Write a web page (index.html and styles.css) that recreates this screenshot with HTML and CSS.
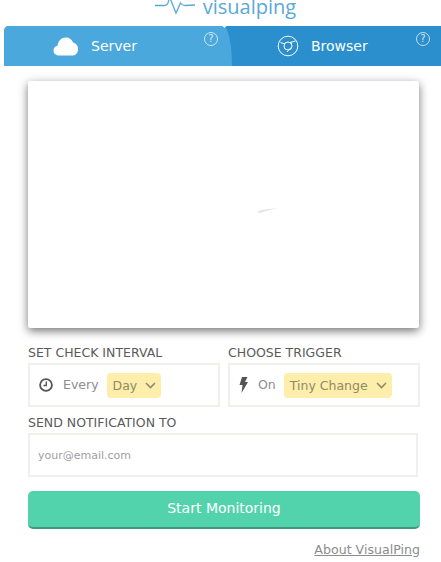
FILE: index.html
```html
<!DOCTYPE html>
<html lang="en">
<head>
    <meta charset="UTF-8">
    <meta name="viewport" content="width=device-width, initial-scale=1.0">
    <title>VisualPing</title>
    <link rel="stylesheet" href="styles.css">
</head>
<body>
    <header class="logo">
        <svg class="logo-pulse" width="40" height="14" viewBox="0 0 40 14">
            <path d="M0 5.500 H10 Q12 5.500 13 3 L14.500 -3 L21 13 L25.500 3 Q27 5.500 30 5.500 L40 5" fill="none" stroke="#5aa9d8" stroke-width="1.300"/>
        </svg>
        <span class="logo-text">visualping</span>
    </header>

    <nav class="tabs">
        <div class="tab tab-server">
            <svg class="tab-icon" width="26" height="20" viewBox="0 0 26 20">
                <path d="M6 19.500 C2.500 19.500 0.500 17 0.500 14.500 C0.500 11.800 2.500 10 4.500 9.800 C5 5 8.500 1.500 13 1.500 C16.500 1.500 19 3.500 20 6.500 C23.500 7.500 25.500 10.500 25 14 C24.600 17.500 22.500 19.500 19.500 19.500 Z" fill="#fff"/>
            </svg>
            <span class="tab-label">Server</span>
            <span class="help">?</span>
        </div>
        <div class="tab tab-browser">
            <svg class="tab-icon" width="22" height="22" viewBox="0 0 22 22" fill="none" stroke="#fff">
                <circle cx="11" cy="11" r="9.800"/>
                <circle cx="11" cy="11" r="4"/>
                <path d="M3.500 7.500 L8 9 M18.500 6 L13 7.500 L15 9 M10 17 L14 12.500"/>
            </svg>
            <span class="tab-label">Browser</span>
            <span class="help">?</span>
        </div>
    </nav>

    <main class="content">
        <div class="preview">
            <svg class="spinner" width="22" height="5" viewBox="0 0 22 5">
                <path d="M0 4 Q6 0.500 21 0.500 Q10 2 3 5 Z" fill="#e2e2e2"/>
            </svg>
        </div>

        <div class="settings">
            <section class="field">
                <h2 class="field-label">SET CHECK INTERVAL</h2>
                <div class="field-box">
                    <svg class="field-icon" width="14" height="14" viewBox="0 0 14 14" fill="none" stroke="#555" stroke-width="1.800">
                        <circle cx="7" cy="7" r="5.900"/>
                        <path d="M7.300 3.500 V7.500 H4.500" stroke-width="1.400"/>
                    </svg>
                    <span class="field-word">Every</span>
                    <span class="pick">Day
                        <svg width="11" height="7" viewBox="0 0 11 7" fill="none" stroke="#8f8a66" stroke-width="1.600"><path d="M1 1 L5.500 5.500 L10 1"/></svg>
                    </span>
                </div>
            </section>
            <section class="field">
                <h2 class="field-label">CHOOSE TRIGGER</h2>
                <div class="field-box">
                    <svg class="field-icon" width="9" height="16" viewBox="0 0 9 16">
                        <path d="M3 0 H8.500 L6 5 H9 L2.500 16 L3.500 8 H0.500 Z" fill="#555"/>
                    </svg>
                    <span class="field-word">On</span>
                    <span class="pick">Tiny Change
                        <svg width="11" height="7" viewBox="0 0 11 7" fill="none" stroke="#8f8a66" stroke-width="1.600"><path d="M1 1 L5.500 5.500 L10 1"/></svg>
                    </span>
                </div>
            </section>
        </div>

        <h2 class="field-label">SEND NOTIFICATION TO</h2>
        <input class="email" type="text" placeholder="your@email.com">

        <button class="start" type="button">Start Monitoring</button>

        <div class="about"><a href="#">About VisualPing</a></div>
    </main>
</body>
</html>
```

FILE: styles.css
```css
body {
    font-family: "DejaVu Sans", Verdana, sans-serif;
    margin: 0;
    padding: 0;
    background: #fff;
    color: #555;
    overflow: hidden;
}

.logo {
    height: 26px;
    overflow: hidden;
    display: flex;
    justify-content: center;
    align-items: flex-start;
    gap: 8px;
}

.logo-pulse {
    overflow: visible;
    margin-left: 10px;
}

.logo-text {
    font-family: "Open Sans", sans-serif;
    font-size: 20px;
    line-height: 26px;
    margin-top: -6px;
    color: #5aa9d8;
}

.tabs {
    margin-left: 4px;
    height: 40px;
    display: flex;
    background: #2b8fcd;
    border-top-left-radius: 5px;
    color: #fff;
}

.tab {
    position: relative;
    display: flex;
    align-items: center;
    font-size: 14px;
}

.tab-server {
    width: 228px;
    padding-left: 49px;
    box-sizing: border-box;
    background: #4ba8dc;
    border-top-left-radius: 5px;
    border-top-right-radius: 9px 40px;
}

.tab-server::after {
    content: "";
    position: absolute;
    top: -4px;
    right: 5px;
    width: 5px;
    height: 5px;
    background: #fff;
    transform: rotate(45deg);
}

.tab-browser {
    flex: 1;
    padding-left: 45px;
}

.tab-icon {
    margin-right: 12px;
}

.help {
    position: absolute;
    top: 6px;
    width: 12px;
    height: 12px;
    border: 1px solid rgba(255, 255, 255, 0.7);
    border-radius: 50%;
    font-size: 10px;
    line-height: 12px;
    text-align: center;
    color: rgba(255, 255, 255, 0.8);
}

.tab-server .help {
    right: 14px;
}

.tab-browser .help {
    right: 11px;
}

.content {
    padding: 15px 21px 0 28px;
}

.preview {
    height: 247px;
    width: 391px;
    background: #fff;
    border-radius: 2px;
    box-shadow: 0 3px 10px rgba(0, 0, 0, 0.55);
    display: flex;
    justify-content: center;
    padding: 127px 0 0 88px;
    box-sizing: border-box;
}

.spinner {
    display: block;
}

.settings {
    display: flex;
    gap: 8px;
    margin-top: 17px;
}

.field {
    width: 192px;
}

.field-label {
    margin: 0 0 2px;
    font-size: 12.500px;
    font-weight: normal;
    line-height: 16px;
    color: #5a5a5a;
}

.field-box {
    box-sizing: border-box;
    height: 44px;
    border: 2px solid #efefeb;
    display: flex;
    align-items: center;
    padding-left: 9px;
    font-size: 12.500px;
}

.field-icon {
    margin-right: 10px;
}

.field-word {
    color: #8c8c8c;
    margin-right: 8px;
    position: relative;
    top: -1px;
}

.pick {
    display: flex;
    align-items: center;
    gap: 8px;
    height: 25px;
    padding: 0 5px 0 6px;
    background: #fdeeab;
    border-radius: 4px;
    color: #8f8a66;
}

.settings + .field-label {
    margin-top: 8px;
}

.email {
    display: block;
    box-sizing: border-box;
    width: 390px;
    height: 44px;
    border: 2px solid #efefeb;
    padding: 0 8px;
    font-family: "DejaVu Sans", Verdana, sans-serif;
    font-size: 11px;
    outline: none;
}

.email::placeholder {
    color: #a0a0a0;
}

.start {
    display: block;
    width: 392px;
    height: 38px;
    margin-top: 14px;
    padding: 0 0 3px;
    border: 0;
    border-bottom: 2px solid #3c9a80;
    border-radius: 5px;
    background: #53d3ac;
    color: #fff;
    font-family: "DejaVu Sans", Verdana, sans-serif;
    font-size: 14px;
}

.about {
    width: 392px;
    margin-top: 13px;
    text-align: right;
    font-size: 12.600px;
}

.about a {
    color: #8c8c8c;
}
```
